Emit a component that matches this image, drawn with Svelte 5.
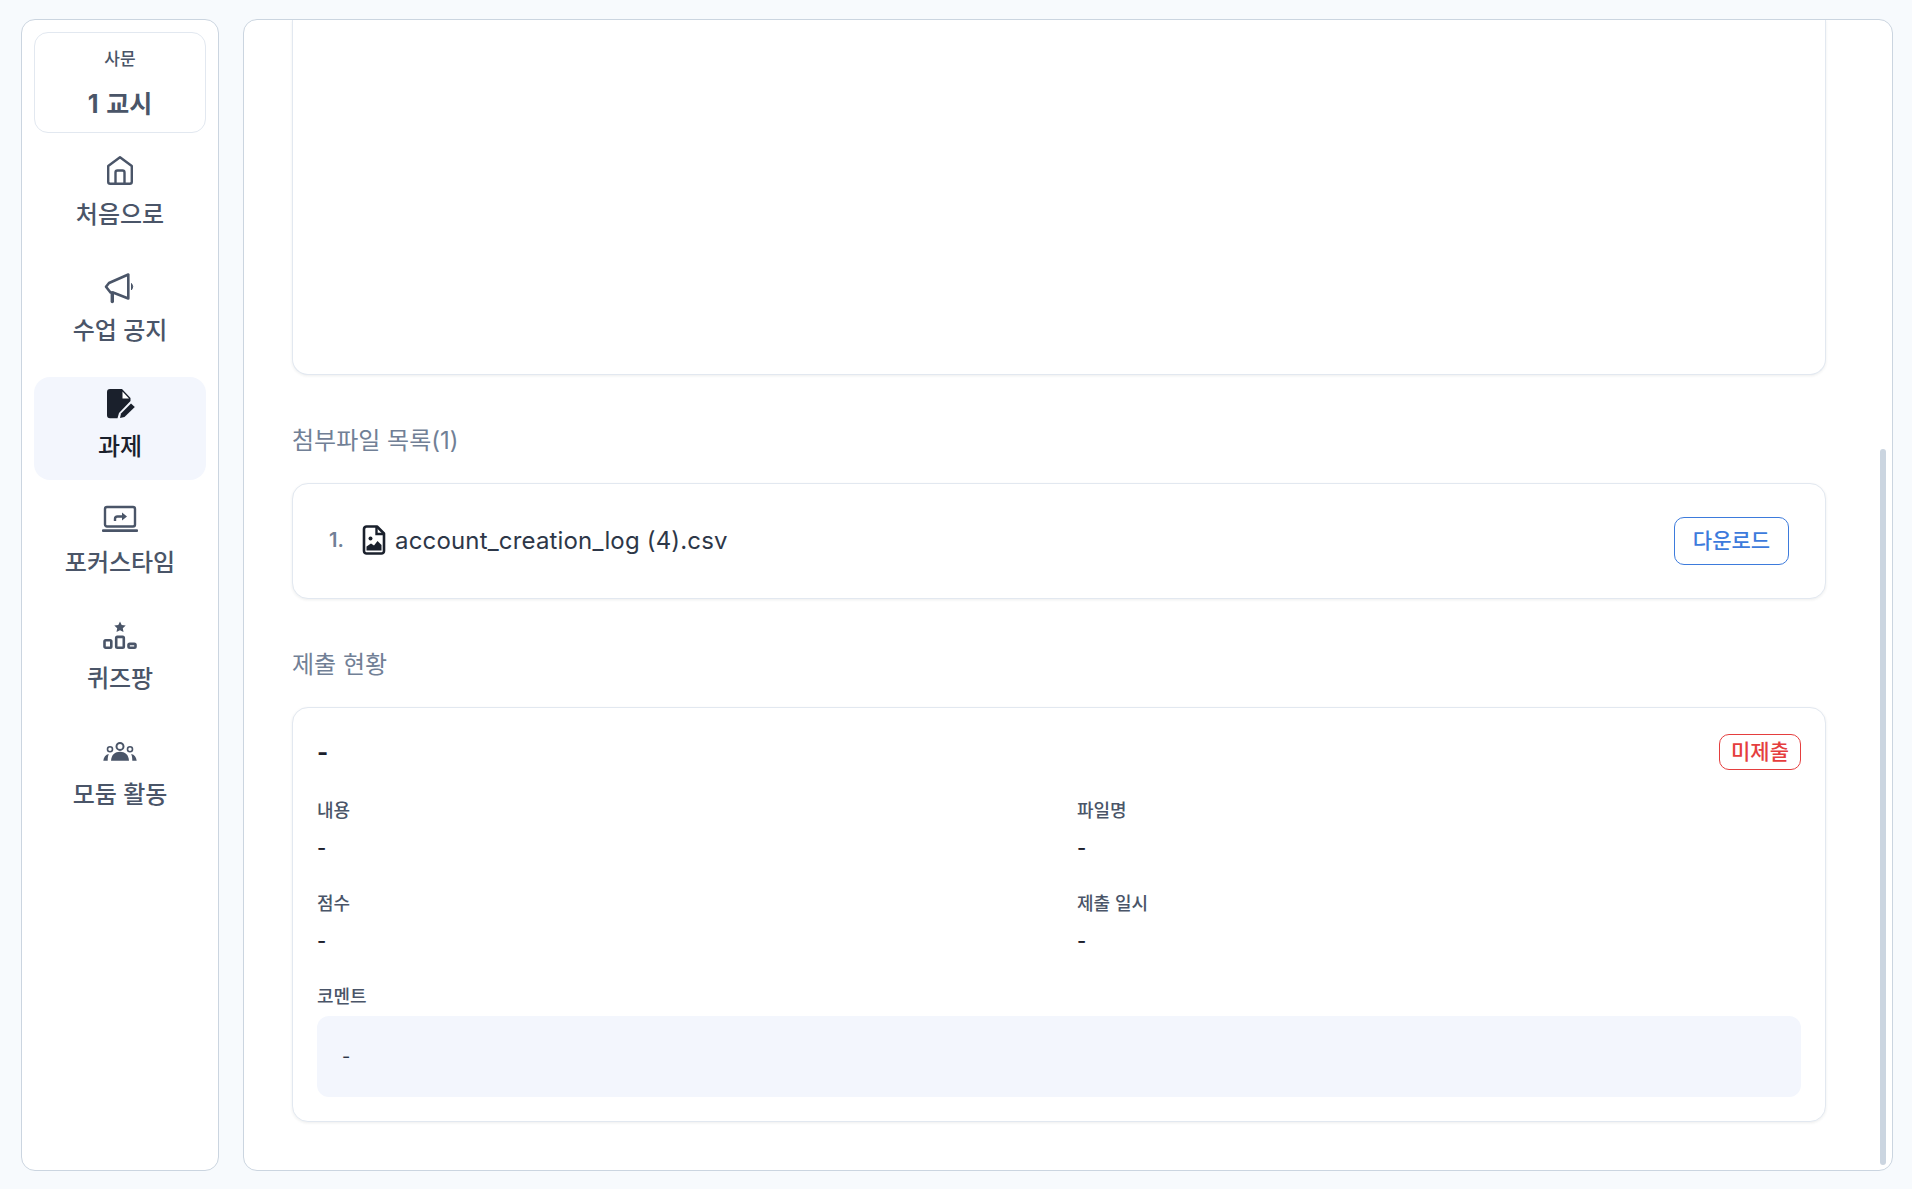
<script>
  const navItems = [
    { label: "처음으로", icon: "home" },
    { label: "수업 공지", icon: "notice" },
    { label: "과제", icon: "task", active: true },
    { label: "포커스타임", icon: "focus" },
    { label: "퀴즈팡", icon: "quiz" },
    { label: "모둠 활동", icon: "group" },
  ];
</script>

<div class="page">
  <aside class="sidebar">
    <div class="period">
      <div class="subject">사문</div>
      <div class="class-no">1 교시</div>
    </div>
    <nav class="nav">
      {#each navItems as item}
        <div class="nav-item" class:active={item.active}>
          <svg class="nav-icon" viewBox="0 0 36 36" width="36" height="36">
            {#if item.icon === "home"}
              <path d="M18 4.200 L29.800 13 V28.800 a2 2 0 0 1 -2 2 H8.200 a2 2 0 0 1 -2 -2 V13 Z M13.500 30 V19.500 a2 2 0 0 1 2 -2 h5 a2 2 0 0 1 2 2 V30" fill="none" stroke="currentColor" stroke-width="2.400" stroke-linejoin="round" />
            {:else if item.icon === "notice"}
              <path d="M26.300 5.500 V29.500 L11 23.500 H8.500 L4 17.700 L7 14 Z" fill="none" stroke="currentColor" stroke-width="2.600" stroke-linejoin="round" />
              <path d="M10.300 24 V32.500" stroke="currentColor" stroke-width="3.400" stroke-linecap="round" />
              <path d="M29.500 14.500 q2.500 3.200 0 6.400 Z" fill="currentColor" stroke="currentColor" stroke-width="1" />
            {:else if item.icon === "task"}
              <path d="M8 4 H20 L28.500 13 V16 L17 28 L15.500 33.300 H8 a3 3 0 0 1 -3 -3 V7 a3 3 0 0 1 3 -3 Z" fill="currentColor" />
              <path d="M20.500 6.500 L27 13.500 H20.500 Z" fill="#fff" />
              <path d="M18 33 L19 28.500 L29 18.500 L32.800 22 L22.500 32 Z" fill="currentColor" />
            {:else if item.icon === "focus"}
              <rect x="3" y="6" width="30" height="19.500" rx="2" fill="none" stroke="currentColor" stroke-width="2.400" />
              <path d="M1 29.600 H35" stroke="currentColor" stroke-width="2.600" stroke-linecap="round" />
              <path d="M13 20 V18 a2.500 2.500 0 0 1 2.500 -2.500 H21" fill="none" stroke="currentColor" stroke-width="2.400" />
              <path d="M20 11.500 L25 15.500 L20 19.500 Z" fill="currentColor" />
            {:else if item.icon === "quiz"}
              <path d="M18 4.500 L19.700 8 L23.700 8.500 L20.800 11.200 L21.500 15 L18 13.200 L14.500 15 L15.200 11.200 L12.300 8.500 L16.300 8 Z" fill="currentColor" />
              <rect x="2.500" y="23.200" width="6.800" height="7.600" rx="1.200" fill="none" stroke="currentColor" stroke-width="2.600" />
              <rect x="14.200" y="19.900" width="7.600" height="10.900" rx="1.200" fill="none" stroke="currentColor" stroke-width="2.600" />
              <rect x="26.500" y="26.900" width="7" height="3.900" rx="1.200" fill="none" stroke="currentColor" stroke-width="2.600" />
            {:else}
              <circle cx="18" cy="13.400" r="3.500" fill="none" stroke="currentColor" stroke-width="2" />
              <circle cx="8" cy="16.300" r="2.500" fill="none" stroke="currentColor" stroke-width="1.600" />
              <circle cx="28" cy="16.300" r="2.500" fill="none" stroke="currentColor" stroke-width="1.600" />
              <path d="M9 27.700 C9.500 21.500 13 18.800 18 18.800 S26.500 21.500 27 27.700 Z" fill="currentColor" />
              <path d="M1.300 27.700 C1.800 24 3.500 21.500 6.800 21 C6 23 5.700 25 5.700 27.700 Z M34.700 27.700 C34.200 24 32.500 21.500 29.200 21 C30 23 30.300 25 30.300 27.700 Z" fill="currentColor" />
            {/if}
          </svg>
          <span class="nav-label">{item.label}</span>
        </div>
      {/each}
    </nav>
  </aside>

  <main class="main">
    <div class="scroll-thumb"></div>
    <div class="content">
      <div class="card editor"></div>

      <h2 class="heading">첨부파일 목록(1)</h2>
      <div class="card file-card">
        <div class="file">
          <span class="file-no">1.</span>
          <svg class="file-icon" viewBox="0 0 24 30" width="24" height="30">
            <path d="M4.500 1.500 H15 L22 8.500 V26 A2.500 2.500 0 0 1 19.500 28.500 H4.500 A2.500 2.500 0 0 1 2 26 V4 A2.500 2.500 0 0 1 4.500 1.500 Z" fill="none" stroke="currentColor" stroke-width="2.600" stroke-linejoin="round" />
            <path d="M14.500 2 V9 H21.500" fill="none" stroke="currentColor" stroke-width="2.400" />
            <circle cx="8.500" cy="13.500" r="2" fill="currentColor" />
            <path d="M4.500 25.500 V21.500 L9 18.500 L12 20.500 L15.500 16 L19.500 20 V25.500 Z" fill="currentColor" />
          </svg>
          <span class="file-name">account_creation_log (4).csv</span>
        </div>
        <button class="download">다운로드</button>
      </div>

      <h2 class="heading">제출 현황</h2>
      <div class="card status-card">
        <div class="status-head">
          <span class="status-title">-</span>
          <span class="badge">미제출</span>
        </div>
        <div class="fields">
          <div class="field">
            <div class="field-label">내용</div>
            <div class="field-value">-</div>
          </div>
          <div class="field">
            <div class="field-label">파일명</div>
            <div class="field-value">-</div>
          </div>
          <div class="field">
            <div class="field-label">점수</div>
            <div class="field-value">-</div>
          </div>
          <div class="field">
            <div class="field-label">제출 일시</div>
            <div class="field-value">-</div>
          </div>
        </div>
        <div class="field-label comment-label">코멘트</div>
        <div class="comment">-</div>
      </div>
    </div>
  </main>
</div>

<style>
  :global(body) {
    margin: 0;
    background: #f7fafd;
    font-family: Inter, "Noto Sans CJK KR", sans-serif;
    color: #1a202c;
  }

  .page {
    display: flex;
    gap: 24px;
    height: 1189px;
    box-sizing: border-box;
    padding: 19px 19px 18px 21px;
  }

  .sidebar {
    width: 198px;
    flex: none;
    box-sizing: border-box;
    background: #fff;
    border: 1px solid #cbd5e0;
    border-radius: 14px;
    padding: 12px;
  }

  .period {
    height: 101px;
    box-sizing: border-box;
    border: 1px solid #e2e8f0;
    border-radius: 14px;
    text-align: center;
    color: #4a5568;
    padding-top: 14px;
  }

  .subject {
    font-size: 17px;
    font-weight: 500;
    line-height: 24px;
  }

  .class-no {
    font-size: 25px;
    font-weight: 700;
    line-height: 32px;
    margin-top: 17px;
    word-spacing: 2px;
  }

  .nav {
    display: flex;
    flex-direction: column;
    gap: 13px;
    margin-top: 12px;
  }

  .nav-item {
    height: 103px;
    border-radius: 16px;
    display: flex;
    flex-direction: column;
    align-items: center;
    padding-top: 8px;
    box-sizing: border-box;
    color: #4a5568;
    font-weight: 500;
  }

  .nav-item.active {
    background: #f3f6fd;
    color: #1a202c;
  }

  .nav-icon {
    display: block;
  }

  .nav-label {
    font-size: 24px;
    line-height: 32px;
    margin-top: 10px;
  }

  .main {
    flex: 1;
    position: relative;
    background: #fff;
    border: 1px solid #cbd5e0;
    border-radius: 14px;
    overflow: hidden;
  }

  .scroll-thumb {
    position: absolute;
    right: 6px;
    top: 429px;
    bottom: 5px;
    width: 6px;
    border-radius: 3px;
    background: #cbd5e0;
  }

  .content {
    padding: 0 66px 0 48px;
  }

  .card {
    background: #fff;
    border: 1px solid #e2e8f0;
    border-radius: 16px;
    box-shadow: 0 1px 3px rgba(26, 32, 44, 0.08);
    box-sizing: border-box;
  }

  .editor {
    height: 355px;
    border-top: none;
    border-radius: 0 0 16px 16px;
  }

  .heading {
    margin: 50px 0 26px;
    font-size: 24px;
    font-weight: 400;
    line-height: 32px;
    color: #718096;
  }

  .file-card {
    height: 116px;
    display: flex;
    align-items: center;
    justify-content: space-between;
    padding: 0 36px;
  }

  .file {
    display: flex;
    align-items: center;
    margin-top: -2px;
  }

  .file-no {
    font-size: 20px;
    font-weight: 600;
    color: #718096;
    width: 33px;
  }

  .file-icon {
    color: #1a202c;
    margin-right: 9px;
  }

  .file-name {
    font-size: 24px;
    letter-spacing: 0.17px;
    color: #2d3748;
  }

  .download {
    width: 115px;
    height: 48px;
    border: 1px solid #3d7bdc;
    border-radius: 10px;
    background: #fff;
    color: #3d7bdc;
    font-family: inherit;
    font-size: 21px;
    font-weight: 500;
    padding: 0 0 4px;
  }

  .status-card {
    height: 415px;
    padding: 26px 24px 0;
  }

  .status-head {
    display: flex;
    align-items: center;
    justify-content: space-between;
  }

  .status-title {
    font-size: 24px;
    font-weight: 700;
  }

  .badge {
    width: 82px;
    height: 36px;
    box-sizing: border-box;
    border: 1.5px solid #e53e3e;
    border-radius: 10px;
    color: #e53e3e;
    font-size: 21px;
    font-weight: 500;
    line-height: 34px;
    text-align: center;
  }

  .fields {
    display: grid;
    grid-template-columns: 1fr 1fr;
    column-gap: 36px;
    row-gap: 30px;
    margin-top: 29px;
  }

  .field-label {
    font-size: 18px;
    font-weight: 500;
    line-height: 24px;
    color: #4a5568;
  }

  .field-value {
    font-size: 20px;
    font-weight: 500;
    line-height: 28px;
    margin-top: 11px;
  }

  .comment-label {
    margin-top: 30px;
  }

  .comment {
    height: 81px;
    margin-top: 7px;
    background: #f3f6fd;
    border-radius: 12px;
    padding: 0 25px;
    font-size: 18px;
    line-height: 81px;
    color: #2d3748;
  }
</style>
